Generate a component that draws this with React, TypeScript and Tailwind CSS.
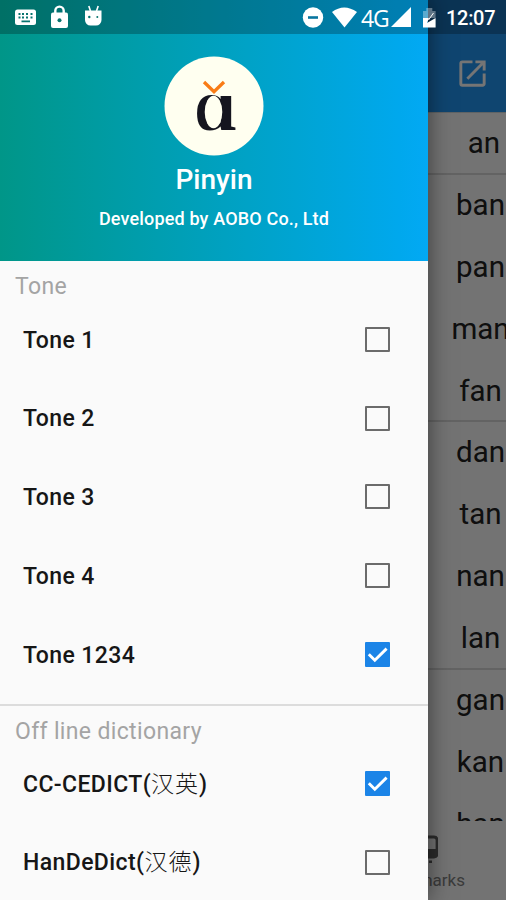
import { MdOutlineOpenInNew } from 'react-icons/md'

const syllables = [
  { text: 'an', divider: true },
  { text: 'ban' },
  { text: 'pan' },
  { text: 'man' },
  { text: 'fan', divider: true },
  { text: 'dan' },
  { text: 'tan' },
  { text: 'nan' },
  { text: 'lan', divider: true },
  { text: 'gan' },
  { text: 'kan' },
  { text: 'han' },
]

const tones = [
  { label: 'Tone 1', checked: false },
  { label: 'Tone 2', checked: false },
  { label: 'Tone 3', checked: false },
  { label: 'Tone 4', checked: false },
  { label: 'Tone 1234', checked: true },
]

const dictionaries = [
  { label: 'CC-CEDICT', hanzi: '汉英', checked: true },
  { label: 'HanDeDict', hanzi: '汉德', checked: false },
]

function Checkbox({ checked }: { checked: boolean }) {
  if (!checked) return <span className="block size-[25px] rounded-[1px] border-2 border-[#6b6b6b]" />
  return (
    <span className="block size-[25px] rounded-[1px] bg-[#1b84e7]">
      <svg viewBox="0 0 25 25" className="size-[25px]" fill="none" stroke="#fff" strokeWidth="2.9">
        <path d="M3.8 12.2 L9.8 18.2 L21.6 6.6" />
      </svg>
    </span>
  )
}

function Option({ label, hanzi, checked }: { label: string; hanzi?: string; checked: boolean }) {
  return (
    <label className="flex h-[78.75px] items-center justify-between pl-[23px] pr-[38px]">
      <span className="whitespace-nowrap pt-[3px] text-[23px] font-medium tracking-[0.4px] text-[#161616]">
        {label}
        {hanzi && <>(<span className="font-light tracking-[1px]">{hanzi}</span>)</>}
      </span>
      <Checkbox checked={checked} />
    </label>
  )
}

function StatusBar() {
  return (
    <div className="absolute inset-x-0 top-0 flex h-[34px] bg-black/25 text-white">
      <svg width="506" height="34" viewBox="0 0 506 34" fill="#fff">
        {/* keyboard */}
        <rect x="15" y="9.5" width="21" height="15.5" rx="2.5" />
        <g fill="#08746f">
          <path d="M18.5 13h2v2h-2zM22 13h2v2h-2zM26 13h2v2h-2zM30.5 13h2v2h-2zM18.5 16.5h2v2h-2zM22 16.5h2v2h-2zM26 16.5h2v2h-2zM30.5 16.5h2v2h-2zM21.5 20.5h8.5v1.7h-8.5z" />
        </g>
        {/* lock */}
        <rect x="51" y="12.5" width="17" height="15.5" rx="2" />
        <path d="M55.3 13.5v-2.7a4.2 4.2 0 0 1 8.4 0v2.7" fill="none" stroke="#fff" strokeWidth="2.4" />
        <circle cx="59.5" cy="20.2" r="2" fill="#08746f" />
        {/* android head */}
        <path d="M85 10.5h16.5v9.5a5.5 5.5 0 0 1-5.5 5.5h-5.5a5.5 5.5 0 0 1-5.5-5.5z" />
        <path d="M90.5 11l-1.7-5M96.500 11l1.700-5" fill="none" stroke="#fff" strokeWidth="1.6" />
        <circle cx="89.3" cy="17" r="1.2" fill="#08746f" />
        <circle cx="97.3" cy="17" r="1" fill="#08746f" />
        {/* do not disturb */}
        <circle cx="313" cy="17.5" r="10.2" />
        <path d="M308 16.2h10v2.6h-10z" fill="#08759f" />
        {/* wifi */}
        <path d="M332 12q12-9 25 0L344.5 27.5z" />
        {/* signal */}
        <path d="M411 7v20h-20z" />
        {/* battery */}
        <path d="M423 11h3.3V8h6v3h3.3v7H423z" fillOpacity=".35" />
        <path d="M423 18h6l-2 5 8.6-5v9.5H423z" />
        <path d="M428.5 20l5-7" stroke="#fff" strokeWidth="1" />
      </svg>
      <span className="absolute left-[361px] top-[4px] font-['Open_Sans'] text-[23px] leading-[28px] tracking-[-1.2px]">4G</span>
      <span className="absolute left-[446px] top-[5px] text-[20px] font-medium leading-[26px] tracking-[-0.3px]">12:07</span>
    </div>
  )
}

function Syllables() {
  return (
    <div className="flex h-full flex-col bg-[#fafafa]">
      <header className="flex h-[113px] shrink-0 items-end justify-end border-b border-[#cfd8dc] bg-[#2196f3] pb-[21px] pr-[16px] text-white">
        <MdOutlineOpenInNew className="size-[35px]" />
      </header>
      <ul className="min-h-0 flex-1 overflow-hidden">
        {syllables.map(({ text, divider }) => (
          <li
            key={text}
            className={`ml-auto flex h-[61.9px] w-[78px] justify-center text-[29.5px] leading-[60px] text-[#212121] ${text === 'an' ? 'pl-[34px]' : 'pl-[27px]'} ${divider ? 'border-b-2 border-[#d8d8d8]' : ''}`}
          >
            {text}
          </li>
        ))}
      </ul>
      <nav className="flex h-[79px] shrink-0 flex-col items-end pr-[41px] pt-[13px] text-[#808080]">
        <svg width="30" height="31" viewBox="0 0 30 31" className="mr-[27px] text-[#616161]">
          <path d="M3 3h23q3 0 3 3v14q0 3-3 3H3" fill="none" stroke="currentColor" strokeWidth="2.8" />
          <path d="M17 15h11v8H17zM21 26.5h3v2.5h-3z" fill="currentColor" />
        </svg>
        <span className="mt-[5px] text-[17px] leading-[20px]">Bookmarks</span>
      </nav>
    </div>
  )
}

function Drawer() {
  return (
    <aside className="absolute inset-y-0 left-0 w-[428px] overflow-hidden bg-[#fafafa] shadow-[0_0_22px_rgba(0,0,0,0.5)]">
      <header className="flex h-[261px] flex-col items-center bg-linear-to-r from-[#009688] to-[#03a9f4] pt-[56px] text-white">
        <svg width="100" height="100" viewBox="0 0 100 100">
          <circle cx="50" cy="50" r="49.5" fill="#fffff0" />
          <text x="51.5" y="73.5" textAnchor="middle" fontFamily="Liberation Serif" fontWeight="700" fontSize="75" fill="#15151f">ɑ</text>
          {/* opens up the counter */}
          <ellipse cx="49.5" cy="56" rx="8.8" ry="16.3" fill="#fffff0" />
          <path d="M40 26l10 9.8L60 26" fill="none" stroke="#f97c16" strokeWidth="3.3" />
        </svg>
        <h1 className="mt-[7px] text-[28px] font-medium leading-[34px]">Pinyin</h1>
        <p className="mt-[9px] text-[18px] font-medium leading-[25px] tracking-[0.16px]">Developed by AOBO Co., Ltd</p>
      </header>
      <section className="border-b-2 border-[#dcdcdc]">
        <h2 className="h-[39px] pl-[15px] pt-[11px] text-[23px] leading-[29px] tracking-[0.35px] text-[#a4a4a4]">Tone</h2>
        <div className="h-[404px]">
          {tones.map((tone) => <Option key={tone.label} {...tone} />)}
        </div>
      </section>
      <section>
        <h2 className="h-[38px] pl-[15px] pt-[11px] text-[23px] leading-[29px] tracking-[0.35px] text-[#a4a4a4]">Off line dictionary</h2>
        {dictionaries.map((dict) => <Option key={dict.label} {...dict} />)}
      </section>
    </aside>
  )
}

export default function App() {
  return (
    <main className="relative h-[900px] w-[506px] overflow-hidden font-['Roboto','Noto_Sans_CJK_SC',sans-serif]">
      <Syllables />
      <div className="absolute inset-0 bg-black/54" />
      <Drawer />
      <StatusBar />
    </main>
  )
}
